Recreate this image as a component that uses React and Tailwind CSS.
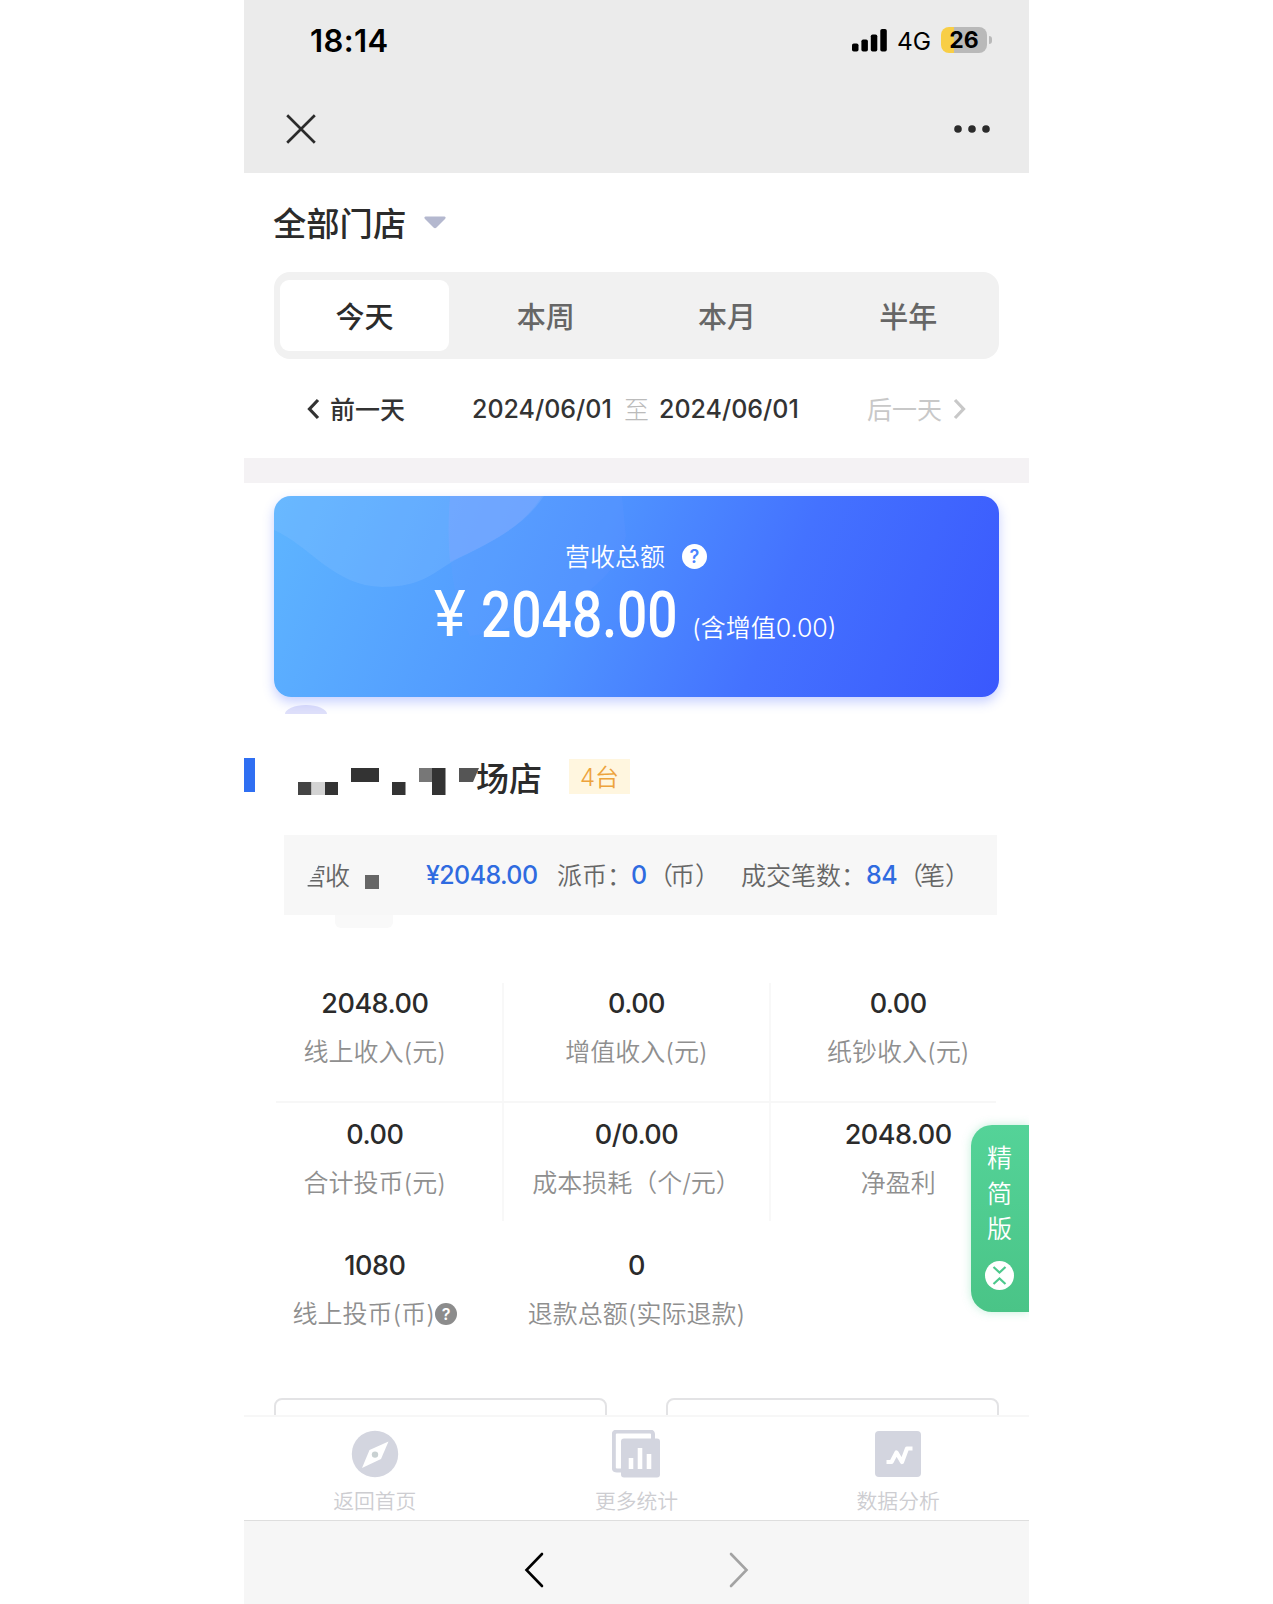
import React, { useState } from "react";

const tabs = ["今天", "本周", "本月", "半年"];

const stats = [
  [
    { value: "2048.00", label: "线上收入(元)" },
    { value: "0.00", label: "增值收入(元)" },
    { value: "0.00", label: "纸钞收入(元)" },
  ],
  [
    { value: "0.00", label: "合计投币(元)" },
    { value: "0/0.00", label: "成本损耗（个/元）" },
    { value: "2048.00", label: "净盈利" },
  ],
  [
    { value: "1080", label: "线上投币(币)", help: true },
    { value: "0", label: "退款总额(实际退款)" },
  ],
];

const Chevron = ({ className, width, height, stroke, right, round }) => (
  <svg
    className={className}
    width={width}
    height={height}
    viewBox={`0 0 ${width} ${height}`}
    fill="none"
    stroke="currentColor"
    strokeWidth={stroke}
    strokeLinecap={round ? "round" : "butt"}
    strokeLinejoin="miter"
  >
    <path
      d={
        right
          ? `M2 2L${width - 2.5} ${height / 2}L2 ${height - 2}`
          : `M${width - 2} 2L2.5 ${height / 2}L${width - 2} ${height - 2}`
      }
    />
  </svg>
);

const StatusBar = () => (
  <div className="flex h-[80px] items-center pl-[66px] pr-[37px] text-black">
    <span className="text-[31px] font-semibold leading-none tracking-[0.4px]">
      18:14
    </span>
    <svg className="ml-auto" width="35" height="24" viewBox="0 0 35 24">
      <rect x="0" y="15.5" width="6.5" height="8" rx="1.8" />
      <rect x="9.4" y="11.5" width="6.5" height="12" rx="1.8" />
      <rect x="18.8" y="6.5" width="6.5" height="17" rx="1.8" />
      <rect x="28.3" y="1" width="6.5" height="22.5" rx="1.8" />
    </svg>
    <span className="ml-[10px] w-[34px] pt-[3px] text-[24.5px] leading-none">4G</span>
    <div className="ml-[10px] flex h-[26px] w-[46px] items-center justify-center rounded-[8px] bg-[linear-gradient(90deg,#f8ce46_13px,#b9b9b9_13px)]">
      <span className="text-[23px] font-bold leading-none">26</span>
    </div>
    <span className="ml-[2px] h-[8px] w-[3px] rounded-r-full bg-[#b9b9b9]" />
  </div>
);

const Header = () => (
  <header className="h-[173px] shrink-0 bg-[#ebebeb]">
    <StatusBar />
    <div className="flex h-[98px] items-center justify-between pl-[42px] pr-[39px] text-[#2b2b2b]">
      <svg width="30" height="30" viewBox="0 0 30 30" stroke="currentColor" strokeWidth="2.7">
        <path d="M1.2 1.2L28.8 28.8M28.8 1.2L1.2 28.8" />
      </svg>
      <svg width="36" height="8" viewBox="0 0 36 8" fill="currentColor">
        <circle cx="4" cy="4" r="3.8" />
        <circle cx="18" cy="4" r="3.8" />
        <circle cx="32" cy="4" r="3.8" />
      </svg>
    </div>
  </header>
);

const DateRow = () => (
  <div className="mt-[30px] flex h-[40px] items-center pl-[63px] text-[25px] leading-none text-[#333]">
    <Chevron width={13} height={22} stroke={3.2} />
    <span className="ml-[10px] w-[75px] whitespace-nowrap pt-[2px] font-medium">前一天</span>
    <span className="ml-[67px] w-[140px] whitespace-nowrap font-medium">2024/06/01</span>
    <span className="ml-[12px] w-[25px] pt-[2px] font-light text-[#bbb]">至</span>
    <span className="ml-[10px] w-[140px] whitespace-nowrap font-medium">2024/06/01</span>
    <span className="ml-[68px] w-[75px] whitespace-nowrap pt-[2px] text-[#c8c8c8]">后一天</span>
    <Chevron className="ml-[11px] text-[#c8c8c8]" width={13} height={22} stroke={3.2} right />
  </div>
);

const RevenueCard = () => (
  <div className="relative ml-[30px] mt-[13px] h-[201px] w-[725px] shrink-0 overflow-hidden rounded-[17px] bg-[linear-gradient(112deg,#5eb5ff_0%,#4f94ff_42%,#4472ff_68%,#3a58fd_100%)] text-white shadow-[0_5px_12px_rgba(80,110,255,0.32)]">
    <svg className="absolute left-0 top-0" width="726" height="202" viewBox="0 0 726 202">
      <path d="M0 0V34C36 50 60 90 108 91C150 91 160 75 185 62C220 45 250 30 270 0Z" fill="#8fc4ff" fillOpacity=".24" />
      <path d="M176 0Q173 35 176 66C220 45 250 30 268 0Z" fill="#8fa8ff" fillOpacity=".28" />
      <path d="M176 0C174 50 176 100 196 140C260 130 340 100 352 40L348 0Z" fill="#7fa0ff" fillOpacity=".1" />
    </svg>
    <div className="relative flex items-center pl-[291px] pt-[46px]">
      <span className="w-[101px] whitespace-nowrap pt-[2px] text-[25px] leading-[26px] [font-weight:350]">营收总额</span>
      <span className="ml-[16px] flex h-[25px] w-[25px] items-center justify-center rounded-full bg-white pt-[1px] text-[18px] font-semibold leading-none text-[#4a84ff]">
        ?
      </span>
    </div>
    <div className="relative flex items-end pl-[160px] pt-[13px]">
      <span className="w-[47px] origin-left scale-x-[0.94] whitespace-nowrap font-[Roboto] text-[64px] leading-[64px]">
        ¥
      </span>
      <span className="w-[197px] origin-left scale-x-[0.82] whitespace-nowrap font-[Roboto] text-[65px] font-medium leading-[64px]">
        2048.00
      </span>
      <span className="ml-[14px] whitespace-nowrap pb-[6px] text-[25px] leading-[26px] [font-weight:350]">
        (含增值0.00)
      </span>
    </div>
  </div>
);

const StoreTitle = () => (
  <div className="flex h-[46px] shrink-0 items-center">
    <span className="mt-[1px] h-[34px] w-[11px] bg-[#2f6ff2]" />
    <svg className="ml-[39px]" width="186" height="46" viewBox="0 0 186 46">
      <rect x="4" y="31" width="13.5" height="13" fill="#444" />
      <rect x="17.5" y="31" width="13.5" height="13" fill="#d3d3d3" />
      <rect x="31" y="31" width="13" height="13" fill="#333" />
      <rect x="57" y="17" width="28" height="14" fill="#333" />
      <rect x="98" y="31" width="13.5" height="13" fill="#333" />
      <rect x="125" y="17" width="13.5" height="14" fill="#777" />
      <rect x="138" y="17" width="13.5" height="27" fill="#333" />
      <path d="M165 17H185L179 31H165Z" fill="#555" />
    </svg>
    <span className="ml-[-4px] w-[66px] whitespace-nowrap pt-[11px] text-[33px] font-medium leading-none text-[#2b2b2b]">
      场店
    </span>
    <span className="ml-[27px] mt-[5px] flex h-[35px] w-[61px] items-center justify-center bg-[#fff6df] pt-[3px] text-[24px] leading-none text-[#eda33c] [font-weight:350]">
      4台
    </span>
  </div>
);

const Summary = () => (
  <>
    <div className="ml-[40px] mt-[38px] flex h-[80px] w-[713px] shrink-0 items-center bg-[#f7f7f7] text-[25px] leading-none text-[#666]">
      <span className="ml-[17px] w-[24px] pt-[2px] [clip-path:polygon(80%_5%,100%_0,100%_100%,28%_100%,28%_88%)] [font-weight:350]">营</span>
      <span className="w-[25px] pt-[2px] [font-weight:350]">收</span>
      <span className="ml-[15px] mt-[14px] h-[14px] w-[14px] bg-[#666]" />
      <span className="ml-[47px] w-[113px] whitespace-nowrap font-medium tracking-[-0.6px] text-[#2f6be0]">
        ¥2048.00
      </span>
      <span className="ml-[18px] w-[74px] whitespace-nowrap pt-[2px] [font-weight:350]">派币：</span>
      <span className="w-[16px] font-medium text-[#2f6be0]">0</span>
      <span className="ml-[1px] w-[75px] whitespace-nowrap pt-[2px] [font-weight:350]">
        <span className="tracking-[-3px]">（</span>币）
      </span>
      <span className="ml-[18px] w-[125px] whitespace-nowrap pt-[2px] [font-weight:350]">成交笔数：</span>
      <span className="w-[32px] font-medium tracking-[-0.6px] text-[#2f6be0]">84</span>
      <span className="whitespace-nowrap pt-[2px] [font-weight:350]">
        <span className="tracking-[-3px]">（</span>笔）
      </span>
    </div>
    <div className="ml-[91px] h-[13px] w-[58px] shrink-0 rounded-b-md bg-[#f9f9f9]" />
  </>
);

const StatCell = ({ item }) => (
  <div className="flex flex-col items-center">
    <span className="text-[27px] font-medium leading-[30px] tracking-[-0.5px] text-[#2b2b2b]">{item.value}</span>
    <div className="mt-[18px] flex items-center whitespace-nowrap text-[25px] leading-[30px] text-[#8f8f8f] [font-weight:350]">
      {item.label}
      {item.help && (
        <span className="flex h-[22px] w-[22px] items-center justify-center rounded-full bg-[#8c8c8c] text-[16px] font-semibold leading-none text-white">
          ?
        </span>
      )}
    </div>
  </div>
);

const Stats = () => (
  <div className="relative mt-[61px] h-[360px] shrink-0">
    <div className="absolute left-[258px] top-[-6px] h-[238px] w-[2px] bg-[#f8f8f8]" />
    <div className="absolute left-[525px] top-[-6px] h-[238px] w-[2px] bg-[#f8f8f8]" />
    <div className="absolute left-[32px] top-[112px] h-[2px] w-[720px] bg-[#f7f7f7]" />
    {stats.map((row, i) => (
      <div key={i} className="relative grid h-[131px] grid-cols-3">
        {row.map((item) => (
          <StatCell key={item.label} item={item} />
        ))}
      </div>
    ))}
  </div>
);

const LiteToggle = () => (
  <div className="absolute right-0 top-[1125px] flex h-[187px] w-[58px] flex-col items-center rounded-l-[21px] bg-[linear-gradient(180deg,#54d398,#4ac487)] pt-[16px] pr-[1px] text-[25px] leading-[35.5px] text-white shadow-[0_0_10px_rgba(80,210,150,0.35)] [clip-path:inset(-20px_0_-20px_-20px)] [font-weight:350]">
    <span>精</span>
    <span>简</span>
    <span>版</span>
    <svg className="mt-[13px]" width="29" height="29" viewBox="0 0 29 29" fill="none">
      <circle cx="14.5" cy="14.5" r="14.5" fill="#fff" />
      <path d="M8.5 6L14.5 11.5L20.5 6M8.5 23L14.5 17.5L20.5 23" stroke="#4dc98d" strokeWidth="2.2" />
    </svg>
  </div>
);

const CompassIcon = () => (
  <svg width="48" height="48" viewBox="0 0 48 48">
    <circle cx="24" cy="24" r="23.2" fill="#d3d5df" />
    <path d="M37.5 11.5L30 29L11 38L18.5 20Z" fill="#fff" />
    <circle cx="24" cy="24.6" r="3.2" fill="#c9d1d2" />
  </svg>
);

const StatsIcon = () => (
  <svg width="48" height="48" viewBox="0 0 48 48">
    <path d="M9 40.5H5Q1.8 40.5 1.8 37.5V4.5Q1.8 1.6 5 1.6H38Q41 1.6 41 4.5V9" fill="none" stroke="#d3d5df" strokeWidth="4" />
    <rect x="9" y="8.5" width="39" height="39" rx="3" fill="#d3d5df" />
    <path d="M19 28V39M28 18V39M37 24V39" stroke="#fff" strokeWidth="4.6" />
  </svg>
);

const AnalysisIcon = () => (
  <svg width="48" height="48" viewBox="0 0 48 48">
    <rect x="1" y="1" width="46" height="46" rx="4" fill="#d3d5df" />
    <path d="M12.5 32H17.5L22.5 22.5L28 32L33 18.5H38.5" fill="none" stroke="#fff" strokeWidth="4.2" strokeLinejoin="round" />
  </svg>
);

const navItems = [
  { label: "返回首页", icon: CompassIcon },
  { label: "更多统计", icon: StatsIcon },
  { label: "数据分析", icon: AnalysisIcon },
];

const BottomNav = () => (
  <nav className="grid h-[105px] shrink-0 grid-cols-3 border-t-2 border-[#f7f7f7] bg-white">
    {navItems.map(({ label, icon: Icon }) => (
      <div key={label} className="flex flex-col items-center pt-[13px]">
        <Icon />
        <span className="mt-[11px] text-[20.8px] leading-[26px] text-[#cdcdd1] [font-weight:350]">{label}</span>
      </div>
    ))}
  </nav>
);

const App = () => {
  const [activeTab, setActiveTab] = useState("今天");

  return (
    <div className="h-[1604px] overflow-hidden bg-white font-['Inter','Noto_Sans_CJK_SC',sans-serif]">
      <div className="relative ml-[244px] flex h-[1604px] w-[785px] flex-col bg-white">
        <Header />

        <div className="flex h-[99px] shrink-0 items-center pl-[29px]">
          <span className="w-[133px] whitespace-nowrap pt-[4px] text-[33.3px] font-medium leading-none text-[#2b2b2b]">
            全部门店
          </span>
          <svg className="ml-[18px]" width="22" height="13" viewBox="0 0 22 13">
            <path d="M1.5 0.5H20.5Q22.5 1 21 3L12.5 11.5Q11 13 9.5 11.5L1 3Q-0.5 1 1.5 0.5Z" fill="#b4b8cf" />
          </svg>
        </div>

        <div className="ml-[30px] grid h-[87px] w-[725px] shrink-0 grid-cols-4 rounded-[16px] bg-[#f1f1f1]">
          {tabs.map((tab) => (
            <button
              key={tab}
              onClick={() => setActiveTab(tab)}
              className={
                tab === activeTab
                  ? "my-[8px] ml-[6px] mr-[6px] rounded-[9px] bg-white pt-[4px] text-[29px] font-medium leading-none text-[#2b2b2b]"
                  : "pt-[4px] text-[29px] font-medium leading-none text-[#666]"
              }
            >
              {tab}
            </button>
          ))}
        </div>

        <DateRow />
        <div className="mt-[29px] h-[25px] shrink-0 bg-[#f4f2f4]" />
        <RevenueCard />
        <div className="ml-[41px] mt-[8px] h-[9px] w-[42px] shrink-0 rounded-[50%_50%_0_0/100%_100%_0_0] bg-[#dfe0fa]" />

        <div className="mt-[37px] shrink-0">
          <StoreTitle />
        </div>
        <Summary />
        <Stats />

        <div className="mt-auto flex h-[17px] shrink-0 gap-[59px] overflow-hidden pl-[30px]">
          <div className="h-[60px] w-[333px] rounded-[8px] border-2 border-[#e3e3e5]" />
          <div className="h-[60px] w-[333px] rounded-[8px] border-2 border-[#e3e3e5]" />
        </div>
        <BottomNav />
        <footer className="flex h-[84px] shrink-0 items-center justify-center gap-[185px] border-t border-[#dedede] bg-[#f6f6f6] pt-[15px]">
          <Chevron className="text-black" width={20} height={36} stroke={2.6} round />
          <Chevron className="text-[#a3a3a3]" width={20} height={36} stroke={2.6} right round />
        </footer>

        <LiteToggle />
      </div>
    </div>
  );
};

export default App;
